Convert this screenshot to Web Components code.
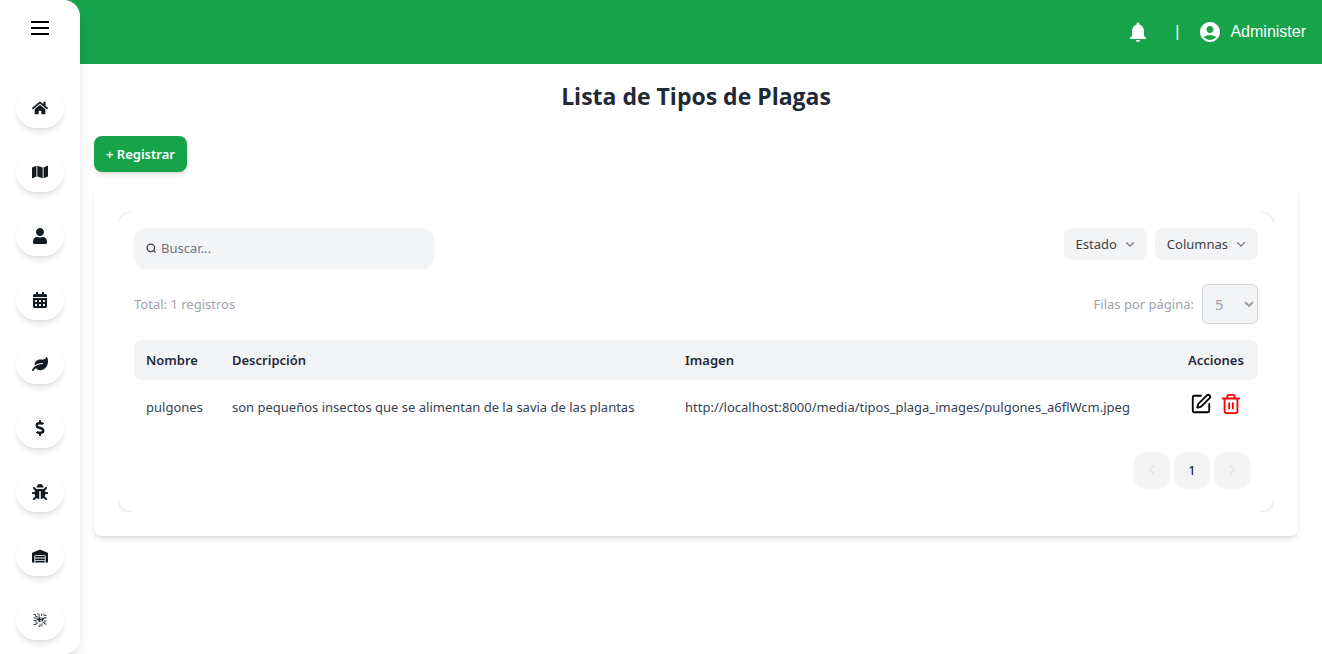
<!DOCTYPE html>
<html lang="es">
<head>
<meta charset="utf-8">
<title>Lista de Tipos de Plagas</title>
<style>
  body { margin: 0; background: #fff; font-family: "Noto Sans", "Open Sans", sans-serif; font-size: 13px; line-height: 20px; color: #1f2937; }
</style>
</head>
<body>
<app-shell>
  <app-topbar slot="topbar" user="Administer"></app-topbar>
  <app-sidebar slot="sidebar">
    <nav-pill label="Inicio" icon="home"></nav-pill>
    <nav-pill label="Mapa" icon="map"></nav-pill>
    <nav-pill label="Usuarios" icon="user"></nav-pill>
    <nav-pill label="Actividades" icon="calendar"></nav-pill>
    <nav-pill label="Cultivos" icon="leaf"></nav-pill>
    <nav-pill label="Finanzas" icon="dollar"></nav-pill>
    <nav-pill label="Plagas" icon="bug"></nav-pill>
    <nav-pill label="Inventario" icon="warehouse"></nav-pill>
    <nav-pill label="IoT" icon="circuit"></nav-pill>
  </app-sidebar>
  <page-heading>Lista de Tipos de Plagas</page-heading>
  <register-button>+ Registrar</register-button>
  <surface-card>
    <table-toolbar></table-toolbar>
    <table-summary total="1"></table-summary>
    <pest-table></pest-table>
    <page-nav></page-nav>
  </surface-card>
</app-shell>

<script>
const ICONS = {
  home: ['0 0 576 512', '<path d="M280.37 148.26L96 300.11V464a16 16 0 0 0 16 16l112.06-.29a16 16 0 0 0 15.92-16V368a16 16 0 0 1 16-16h64a16 16 0 0 1 16 16v95.64a16 16 0 0 0 16 16.05L464 480a16 16 0 0 0 16-16V300L295.67 148.26a12.19 12.19 0 0 0-15.3 0zM571.6 251.47L488 182.56V44.05a12 12 0 0 0-12-12h-56a12 12 0 0 0-12 12v72.61L318.47 43a48 48 0 0 0-61 0L4.34 251.47a12 12 0 0 0-1.6 16.9l25.5 31A12 12 0 0 0 45.15 301l235.22-193.74a12.19 12.19 0 0 1 15.3 0L530.9 301a12 12 0 0 0 16.9-1.6l25.5-31a12 12 0 0 0-1.7-16.93z"/>'],
  map: ['0 0 576 512', '<path d="M0 117.66v346.32c0 11.32 11.43 19.06 21.94 14.86L160 416V32L20.12 87.95A32.006 32.006 0 0 0 0 117.66zM192 416l192 64V96L192 32v384zM554.06 33.16L416 96v384l139.88-55.95A31.996 31.996 0 0 0 576 394.34V48.02c0-11.32-11.43-19.06-21.94-14.86z"/>'],
  user: ['0 0 448 512', '<path d="M224 256c70.7 0 128-57.3 128-128S294.7 0 224 0 96 57.3 96 128s57.3 128 128 128zm89.6 32h-16.7c-22.2 10.2-46.9 16-72.9 16s-50.6-5.8-72.9-16h-16.7C60.2 288 0 348.2 0 422.4V464c0 26.5 21.5 48 48 48h352c26.5 0 48-21.5 48-48v-41.6c0-74.2-60.2-134.4-134.4-134.4z"/>'],
  calendar: ['0 0 448 512', '<path fill-rule="evenodd" d="M0 464c0 26.5 21.5 48 48 48h352c26.5 0 48-21.5 48-48V192H0v272zM64 268a12 12 0 0 1 12-12h40a12 12 0 0 1 12 12v40a12 12 0 0 1-12 12H76a12 12 0 0 1-12-12zM192 268a12 12 0 0 1 12-12h40a12 12 0 0 1 12 12v40a12 12 0 0 1-12 12h-40a12 12 0 0 1-12-12zM320 268a12 12 0 0 1 12-12h40a12 12 0 0 1 12 12v40a12 12 0 0 1-12 12h-40a12 12 0 0 1-12-12zM64 396a12 12 0 0 1 12-12h40a12 12 0 0 1 12 12v40a12 12 0 0 1-12 12H76a12 12 0 0 1-12-12zM192 396a12 12 0 0 1 12-12h40a12 12 0 0 1 12 12v40a12 12 0 0 1-12 12h-40a12 12 0 0 1-12-12zM320 396a12 12 0 0 1 12-12h40a12 12 0 0 1 12 12v40a12 12 0 0 1-12 12h-40a12 12 0 0 1-12-12zM400 64h-48V16c0-8.800-7.200-16-16-16h-32c-8.800 0-16 7.200-16 16v48H160V16c0-8.800-7.200-16-16-16h-32c-8.800 0-16 7.200-16 16v48H48C21.500 64 0 85.500 0 112v48h448v-48c0-26.500-21.500-48-48-48z"/>'],
  leaf: ['0 0 576 512', '<path d="M546.2 9.7c-5.6-12.5-21.6-13-28.3-1.2C486.9 62.4 431.4 96 368 96h-80C182 96 96 182 96 288c0 7 .8 13.7 1.5 20.5C161.3 262.8 253.4 224 384 224c8.8 0 16 7.2 16 16s-7.2 16-16 16C132.6 256 26 410.1 2.4 468c-6.6 16.3 1.2 34.9 17.5 41.6 16.4 6.8 35-1.1 41.8-17.3 1.5-3.6 20.9-47.9 71.9-90.6 32.4 43.9 94 85.8 174.9 77.2C465.5 467.5 576 326.7 576 154.3c0-50.2-10.8-102.2-29.8-144.6z"/>'],
  dollar: ['0 0 288 512', '<path d="M209.2 233.4l-108-31.6C88.7 198.2 80 186.5 80 173.5c0-16.3 13.2-29.5 29.5-29.5h66.3c12.2 0 24.2 3.7 34.2 10.5 6.1 4.1 14.3 3.1 19.5-2l34.8-34c7.1-6.9 6.1-18.4-1.8-24.5C238 74.8 207.4 64.1 176 64V16c0-8.8-7.2-16-16-16h-32c-8.8 0-16 7.2-16 16v48h-2.5C45.8 64-5.400 118.7.5 183.6c4.200 46.1 39.4 83.6 83.8 96.6l102.5 30c12.5 3.7 21.2 15.3 21.2 28.3 0 16.3-13.2 29.5-29.5 29.5h-66.3C100 368 88 364.3 78 357.5c-6.1-4.1-14.3-3.1-19.5 2l-34.8 34c-7.1 6.9-6.1 18.4 1.8 24.5 24.5 19.2 55.1 29.9 86.5 30v48c0 8.8 7.2 16 16 16h32c8.800 0 16-7.200 16-16v-48.200c46.600-.9 90.300-28.600 105.700-72.700 21.500-61.600-14.600-124.800-72.500-141.700z"/>'],
  bug: ['0 0 512 512', '<path d="M511.988 288.9c-.478 17.43-15.217 31.1-32.653 31.1H424v16c0 21.864-4.882 42.584-13.6 61.145l60.228 60.228c12.496 12.497 12.496 32.758 0 45.255-12.498 12.497-32.759 12.496-45.256 0l-54.736-54.736C345.886 467.965 314.351 480 280 480V236c0-6.627-5.373-12-12-12h-24c-6.627 0-12 5.373-12 12v244c-34.351 0-65.886-12.035-90.636-32.108l-54.736 54.736c-12.498 12.497-32.759 12.496-45.256 0-12.496-12.497-12.496-32.758 0-45.255l60.228-60.228C92.882 378.584 88 357.864 88 336v-16H32.666C15.23 320 .491 306.33.013 288.9-.484 270.816 14.028 256 32 256h56v-58.745l-46.628-46.628c-12.496-12.497-12.496-32.758 0-45.255 12.498-12.497 32.758-12.497 45.256 0L141.255 160h229.489l54.627-54.627c12.498-12.497 32.758-12.497 45.256 0 12.496 12.497 12.496 32.758 0 45.255L424 197.255V256h56c17.972 0 32.484 14.816 31.988 32.9zM257 0c-61.856 0-112 50.144-112 112h224C369 50.144 318.856 0 257 0z"/>'],
  warehouse: ['0 0 640 512', '<path d="M504 352H136.4c-4.4 0-8 3.6-8 8l-.1 48c0 4.4 3.6 8 8 8H504c4.4 0 8-3.6 8-8v-48c0-4.4-3.6-8-8-8zm0 96H136.1c-4.4 0-8 3.6-8 8l-.1 48c0 4.4 3.6 8 8 8h368c4.4 0 8-3.6 8-8v-48c0-4.4-3.6-8-8-8zm0-192H136.6c-4.4 0-8 3.6-8 8l-.1 48c0 4.4 3.6 8 8 8H504c4.4 0 8-3.6 8-8v-48c0-4.400-3.600-8-8-8zm106.500-139L338.400 3.700a48.150 48.150 0 0 0-36.900 0L29.500 117C11.700 124.500 0 141.900 0 161.300V504c0 4.400 3.600 8 8 8h80c4.400 0 8-3.600 8-8V256c0-17.600 14.600-32 32.600-32h382.800c18 0 32.600 14.400 32.600 32v248c0 4.400 3.600 8 8 8h80c4.400 0 8-3.600 8-8V161.300c0-19.400-11.700-36.800-29.500-44.300z"/>'],
  circuit: ['0 0 16 16', '<g fill="none" stroke="currentColor" stroke-width=".8"><path d="M1.500 2.500h2v2h2M7 1.500v3.500M9.500 1.500v2.500M12 1.500v2h2.500M1.500 6h4M1.500 8.500h2.500v2M1.500 12.500h2.500v-1.500h2M14.500 6h-3v1.500M14.500 9h-3M14.500 12h-2v-1.500h-2M6.500 14.500h1.500v-3M10 14.500v-3M5 2h1M13 5v1"/><path d="M6 6h4.500v3H6zM7.500 5v5M4.500 7.500h7"/></g>'],
  menu: ['0 0 24 24', '<path d="M3 5h18v2H3zM3 11h18v2H3zM3 17h18v2H3z"/>'],
  bell: ['0 0 24 24', '<path d="M12 22c1.1 0 2-.9 2-2h-4c0 1.1.89 2 2 2zm6-6v-5c0-3.07-1.64-5.64-4.5-6.32V4c0-.83-.67-1.5-1.5-1.5s-1.5.67-1.5 1.5v.68C7.63 5.36 6 7.92 6 11v5l-2 2v1h16v-1l-2-2z"/>'],
  account: ['0 0 24 24', '<path d="M12 2C6.48 2 2 6.48 2 12s4.48 10 10 10 10-4.48 10-10S17.52 2 12 2zm0 4c1.93 0 3.5 1.57 3.5 3.5S13.93 13 12 13s-3.5-1.57-3.5-3.5S10.07 6 12 6zm0 14c-2.03 0-4.43-.82-6.14-2.88C7.55 15.8 9.68 15 12 15s4.45.8 6.14 2.12C16.43 19.18 14.03 20 12 20z"/>'],
  search: ['0 0 24 24', '<g fill="none" stroke="currentColor" stroke-width="3" stroke-linecap="round"><circle cx="11.500" cy="11.500" r="9"/><path d="M22 22l-4-4"/></g>'],
  down: ['0 0 24 24', '<path fill="none" stroke="currentColor" stroke-width="3" stroke-linecap="round" stroke-linejoin="round" d="M4 9l8 8 8-8"/>'],
  left: ['0 0 24 24', '<path fill="none" stroke="currentColor" stroke-width="2" stroke-linecap="round" stroke-linejoin="round" d="M15 4l-8 8 8 8"/>'],
  right: ['0 0 24 24', '<path fill="none" stroke="currentColor" stroke-width="2" stroke-linecap="round" stroke-linejoin="round" d="M9 4l8 8-8 8"/>'],
  edit: ['0 0 24 24', '<g fill="none" stroke="currentColor" stroke-width="2" stroke-linecap="round" stroke-linejoin="round"><path d="M12 3H5a2 2 0 0 0-2 2v14a2 2 0 0 0 2 2h14a2 2 0 0 0 2-2v-7"/><path d="M18.375 2.625a1 1 0 0 1 3 3l-9.013 9.014a2 2 0 0 1-.853.505l-2.873.84a.5.5 0 0 1-.62-.62l.84-2.873a2 2 0 0 1 .506-.852z"/></g>'],
  trash: ['0 0 24 24', '<g fill="none" stroke="currentColor" stroke-width="2" stroke-linecap="round" stroke-linejoin="round"><path d="M3 6h18M19 6v14a2 2 0 0 1-2 2H7a2 2 0 0 1-2-2V6M8 6V4a2 2 0 0 1 2-2h4a2 2 0 0 1 2 2v2M10 11v6M14 11v6"/></g>']
};
const icon = (name, size) =>
  `<svg viewBox="${ICONS[name][0]}" width="${size}" height="${size}" fill="currentColor" aria-hidden="true">${ICONS[name][1]}</svg>`;

const BASE = `*, *::before, *::after { box-sizing: border-box; }
  svg { display: block; flex: none; }
  button, input, select { font: inherit; color: inherit; margin: 0; border: 0; }
  button { cursor: pointer; }`;

const define = (name, css, html) => customElements.define(name, class extends HTMLElement {
  connectedCallback() {
    if (this.shadowRoot) return;
    this.attachShadow({ mode: 'open' }).innerHTML =
      `<style>${BASE}${css}</style>${typeof html === 'function' ? html(this) : html}`;
  }
});

define('app-shell', `
  :host { display: grid; grid-template: 64px 1fr / 80px minmax(0, 1fr); min-height: 100vh; }
  ::slotted([slot=topbar]) { grid-area: 1 / 1 / 2 / 3; }
  ::slotted([slot=sidebar]) { grid-area: 1 / 1 / 3 / 2; z-index: 1; }
  main { grid-area: 2 / 2; display: flex; flex-direction: column; align-items: stretch; gap: 16px; padding: 16px 24px 24px 14px; }
`, `<slot name="topbar"></slot><slot name="sidebar"></slot><main><slot></slot></main>`);

define('app-topbar', `
  :host { display: block; background: #16a34a; color: #fff; font: 16px/24px "Liberation Sans", Arial, sans-serif; }
  header { display: flex; align-items: center; justify-content: flex-end; height: 100%; padding: 0 16px; gap: 8px; }
  button { display: flex; padding: 0; background: none; }
  .bar { padding: 0 11px 0 17px; }
  .user { align-items: center; gap: 8px; }
`, el => `<header>
  <button type="button" aria-label="Notificaciones">${icon('bell', 24)}</button>
  <span class="bar">|</span>
  <button type="button" class="user">${icon('account', 24)}<span>${el.getAttribute('user')}</span></button>
</header>`);

define('app-sidebar', `
  :host { display: flex; flex-direction: column; align-items: center; background: #fff; padding: 16px 0 14px;
    border-radius: 0 16px 16px 0; box-shadow: 0 10px 15px -3px rgba(0,0,0,.1), 0 4px 6px -4px rgba(0,0,0,.1); }
  button { display: flex; padding: 0; background: none; color: #000; margin-bottom: 48px; }
  nav { display: flex; flex-direction: column; gap: 24px; }
`, `<button type="button" aria-label="Menú">${icon('menu', 24)}</button><nav><slot></slot></nav>`);

define('nav-pill', `
  :host { display: block; }
  a { display: flex; align-items: center; justify-content: center; width: 48px; height: 40px; border-radius: 20px; background: #fff; color: #111b21;
    box-shadow: 0 4px 6px -1px rgba(0,0,0,.1), 0 2px 4px -2px rgba(0,0,0,.1); }
`, el => `<a href="#${el.getAttribute('icon')}" aria-label="${el.getAttribute('label')}">${icon(el.getAttribute('icon'), 16)}</a>`);

define('page-heading', `
  :host { display: block; margin-bottom: 8px; }
  h1 { margin: 0; font-family: "Open Sans", "Noto Sans", sans-serif; font-size: 23px; line-height: 32px; font-weight: 700; text-align: center; }
`, `<h1><slot></slot></h1>`);

define('register-button', `
  :host { display: block; }
  button { display: block; height: 36px; padding: 0 12px; border-radius: 8px; background: #16a34a; color: #fff; font-weight: 600;
    box-shadow: 0 4px 6px -1px rgba(0,0,0,.1), 0 2px 4px -2px rgba(0,0,0,.1); }
`, `<button type="button"><slot></slot></button>`);

define('surface-card', `
  :host { display: block; padding: 24px; border-radius: 8px; background: #fff;
    box-shadow: 0 4px 6px -1px rgba(0,0,0,.1), 0 2px 4px -2px rgba(0,0,0,.1); }
  .clip { overflow: hidden; }
  .panel { display: flex; flex-direction: column; gap: 16px; padding: 16px; border-radius: 14px; background: #fff;
    box-shadow: 0 0 5px rgba(0,0,0,.02), 0 2px 10px rgba(0,0,0,.06), 0 0 1px rgba(0,0,0,.3); }
`, `<div class="clip"><div class="panel"><slot></slot></div></div>`);

define('table-toolbar', `
  :host { display: flex; align-items: flex-start; justify-content: space-between; gap: 16px; }
  label { display: flex; align-items: center; gap: 5px; width: 300px; height: 40px; padding: 0 12px; border-radius: 12px; background: #f3f4f6; color: #3f3f46; box-shadow: 0 1px 2px rgba(0,0,0,.05); }
  input { flex: 1; min-width: 0; padding: 0; background: none; outline: none; }
  input::placeholder { color: #71717a; opacity: 1; }
  .filters { display: flex; gap: 8px; }
  .filters button { display: flex; align-items: center; gap: 8px; height: 32px; padding: 0 12px; border-radius: 8px; background: #f3f4f6; color: #3f3f46; }
  .filters svg { color: #71717a; }
`, `<label>${icon('search', 10)}<input type="search" placeholder="Buscar..." aria-label="Buscar"></label>
<div class="filters"><button type="button">Estado ${icon('down', 10)}</button><button type="button">Columnas ${icon('down', 10)}</button></div>`);

define('table-summary', `
  :host { display: flex; align-items: center; justify-content: space-between; color: #a1a1aa; }
  label { display: flex; align-items: center; gap: 8px; }
  select { width: 56px; height: 40px; padding: 0 8px; border: 1px solid #d1d5db; border-radius: 6px; background: #f3f4f6; font-size: 15px; }
`, el => `<span>Total: ${el.getAttribute('total')} registros</span>
<label>Filas por página: <select><option>5</option><option>10</option><option>15</option></select></label>`);

define('pest-table', `
  :host { display: block; }
  table { width: 100%; border-collapse: separate; border-spacing: 0; table-layout: fixed; }
  .name { width: 86px; } .text { width: 453px; } .actions { width: 82px; }
  th { height: 40px; padding: 0 12px; background: #f3f4f6; text-align: left; font-weight: 600; white-space: nowrap; }
  th:first-child { border-radius: 8px 0 0 8px; }
  th:last-child { border-radius: 0 8px 8px 0; }
  td { height: 56px; padding: 0 12px 2px; color: #374151; }
  td:last-child { padding-bottom: 8px; }
  .tools { display: flex; gap: 8px; margin-left: 2px; }
  .tools button { display: flex; padding: 0; background: none; color: #000; }
  .tools .delete { color: #f00; }
`, `<table>
  <colgroup><col class="name"><col class="text"><col><col class="actions"></colgroup>
  <thead><tr><th>Nombre</th><th>Descripción</th><th>Imagen</th><th>Acciones</th></tr></thead>
  <tbody><tr><td>pulgones</td><td>son pequeños insectos que se alimentan de la savia de las plantas</td>
  <td>http://localhost:8000/media/tipos_plaga_images/pulgones_a6flWcm.jpeg</td>
  <td><div class="tools"><button type="button" aria-label="Editar">${icon('edit', 22)}</button><button type="button" class="delete" aria-label="Eliminar">${icon('trash', 22)}</button></div></td></tr></tbody>
</table>`);

define('page-nav', `
  :host { display: block; padding: 0 8px 8px; }
  nav { display: flex; justify-content: flex-end; gap: 4px; }
  button { display: flex; align-items: center; justify-content: center; width: 36px; height: 36px; padding: 0; border-radius: 12px; background: #f4f4f5; color: #000; box-shadow: 0 1px 2px rgba(0,0,0,.05); }
  button:disabled { color: #d4d4d8; }
`, `<nav aria-label="Paginación"><button type="button" disabled aria-label="Anterior">${icon('left', 12)}</button><button type="button" aria-current="page">1</button><button type="button" disabled aria-label="Siguiente">${icon('right', 12)}</button></nav>`);
</script>
</body>
</html>
